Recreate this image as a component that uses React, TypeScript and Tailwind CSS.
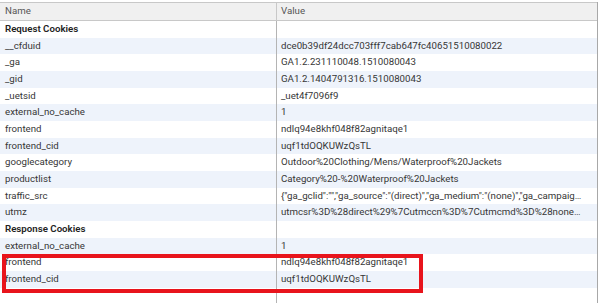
const requestRows: [string, string][] = [
  ['__cfduid', 'dce0b39df24dcc703fff7cab647fc40651510080022'],
  ['_ga', 'GA1.2.231110048.1510080043'],
  ['_gid', 'GA1.2.1404791316.1510080043'],
  ['_uetsid', '_uet4f7096f9'],
  ['external_no_cache', '1'],
  ['frontend', 'ndlq94e8khf048f82agnitaqe1'],
  ['frontend_cid', 'uqf1tdOQKUWzQsTL'],
  ['googlecategory', 'Outdoor%20Clothing/Mens/Waterproof%20Jackets'],
  ['productlist', 'Category%20-%20Waterproof%20Jackets'],
  [
    'traffic_src',
    '{"ga_gclid":"","ga_source":"(direct)","ga_medium":"(none)","ga_campaign":"(direct)","ga_content":"","ga_keyword":""}',
  ],
  ['utmz', 'utmcsr%3D%28direct%29%7Cutmccn%3D%7Cutmcmd%3D%28none%29'],
];

const responseRows: [string, string][] = [
  ['external_no_cache', '1'],
  ['frontend', 'ndlq94e8khf048f82agnitaqe1'],
  ['frontend_cid', 'uqf1tdOQKUWzQsTL'],
];

function Row({ name, value, shaded }: { name: string; value: string; shaded: boolean }) {
  return (
    <div className={`grid grid-cols-[276px_1fr] h-[16.67px] ${shaded ? 'bg-[#eef3fb]' : 'bg-white'}`}>
      <div className="pl-[5px] leading-[16px] truncate">{name}</div>
      <div className="pl-[4px] pr-[14px] leading-[16px] truncate border-l border-[#b4b4b4]">{value}</div>
    </div>
  );
}

function Section({ title }: { title: string }) {
  return (
    <div className="grid grid-cols-[276px_1fr] h-[16.67px] bg-white">
      <div className="pl-[5px] leading-[16px] font-semibold text-[#222]">{title}</div>
      <div className="border-l border-[#b4b4b4]" />
    </div>
  );
}

export default function App() {
  return (
    <div
      className="w-[600px] h-[303px] bg-white overflow-hidden pt-[2px] text-[9.7px] text-[#363636]"
      style={{ fontFamily: 'Roboto, "Open Sans", sans-serif' }}
    >
      <div className="relative w-[598px] h-[301px] border-r border-[#a8a8a8]">
        <div className="grid grid-cols-[276px_1fr] h-[19px] bg-[#f0f0f0] border-t border-b border-[#c8c8c8] text-[#555]">
          <div className="pl-[5px] leading-[16px]">Name</div>
          <div className="pl-[4px] leading-[16px] border-l border-[#c8c8c8]">Value</div>
        </div>
        <Section title="Request Cookies" />
        {requestRows.map(([n, v], i) => (
          <Row key={'q' + i} name={n} value={v} shaded={i % 2 === 0} />
        ))}
        <Section title="Response Cookies" />
        {responseRows.map(([n, v], i) => (
          <Row key={'r' + i} name={n} value={v} shaded={i % 2 === 0} />
        ))}
        <div className="grid grid-cols-[276px_1fr] h-[20px] bg-white">
          <div />
          <div className="border-l border-[#b4b4b4]" />
        </div>
        <div className="absolute left-[2px] top-[252px] w-[421px] h-[39px] border-4 border-[#e8141c]" />
      </div>
    </div>
  );
}
